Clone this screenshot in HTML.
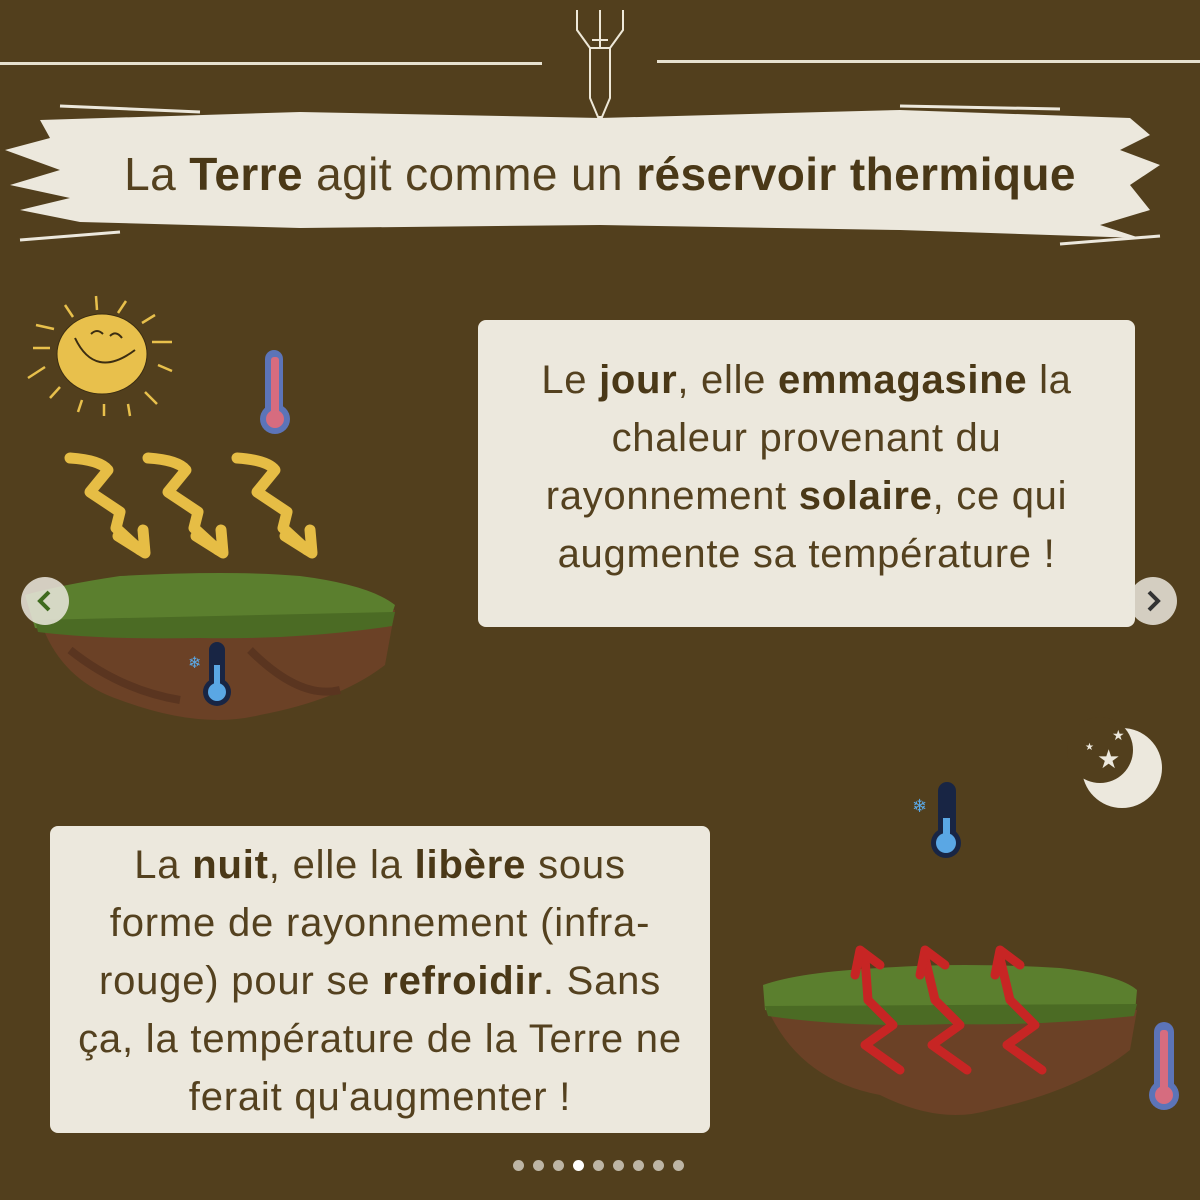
<!DOCTYPE html>
<html><head><meta charset="utf-8"><style>
html,body{margin:0;padding:0;}
body{width:1200px;height:1200px;background:#523f1d;position:relative;overflow:hidden;font-family:"Liberation Sans","DejaVu Sans",sans-serif;}
svg{position:absolute;left:0;top:0;}
.t{position:absolute;color:#54411f;text-align:center;}
.t b{font-weight:bold;color:#4a3817;}
.box{position:absolute;background:#ece8dd;border-radius:8px;}
.title{position:absolute;left:0;width:1200px;top:147px;text-align:center;font-size:46px;color:#54411f;letter-spacing:0.4px;}
.title b{color:#4a3817;}
.p{font-size:40px;line-height:58px;white-space:nowrap;}
.dots{position:absolute;top:1158px;left:513px;}
.dots i{display:inline-block;width:11px;height:11px;border-radius:50%;background:#bdb5a5;margin-right:9px;}
.nav{position:absolute;width:48px;height:48px;border-radius:50%;background:rgba(235,232,222,.85);}
</style></head><body>
<svg width="1200" height="1200" viewBox="0 0 1200 1200">
<rect x="0" y="62" width="542" height="3" fill="#e7e1cf"/>
<rect x="657" y="60" width="543" height="3" fill="#e7e1cf"/>
<g fill="none" stroke="#eee8d8" stroke-width="2">
<path d="M577 10 L577 30 L590 48 M623 10 L623 30 L610 48 M600 10 L600 48 M590 48 L590 98 L598 117 L602 117 L610 98 L610 48 Z M592 40 L608 40"/>
</g>
<path d="M40 120 L300 112 L600 118 L900 110 L1130 118 L1150 135 L1120 150 L1160 165 L1130 185 L1150 210 L1100 225 L1140 238 L900 230 L600 225 L300 228 L80 222 L20 210 L70 198 L10 185 L60 170 L5 150 L50 138 Z" fill="#ece8dd"/>
<g stroke="#ece8dd" stroke-width="3">
<line x1="60" y1="106" x2="200" y2="112"/><line x1="900" y1="106" x2="1060" y2="109"/>
<line x1="20" y1="240" x2="120" y2="232"/><line x1="1060" y1="244" x2="1160" y2="236"/>
</g>
<g stroke="#e8c04c" stroke-width="2.5">
<line x1="96" y1="296" x2="97" y2="310"/><line x1="65" y1="305" x2="73" y2="317"/><line x1="126" y1="301" x2="118" y2="313"/>
<line x1="36" y1="325" x2="54" y2="329"/><line x1="142" y1="323" x2="155" y2="315"/>
<line x1="33" y1="348" x2="50" y2="348"/><line x1="152" y1="342" x2="172" y2="342"/>
<line x1="28" y1="378" x2="45" y2="367"/><line x1="158" y1="365" x2="172" y2="371"/>
<line x1="50" y1="398" x2="60" y2="387"/><line x1="145" y1="392" x2="157" y2="404"/>
<line x1="78" y1="412" x2="82" y2="400"/><line x1="104" y1="416" x2="104" y2="404"/><line x1="130" y1="416" x2="128" y2="404"/>
</g>
<ellipse cx="102" cy="354" rx="45" ry="40" fill="#e8c04c" stroke="#3b2d12" stroke-width="1"/>
<g fill="none" stroke="#3b2d12" stroke-width="2"><path d="M75 338 Q95 380 135 350"/><path d="M91 334 Q97 328 103 334"/><path d="M110 336 Q116 330 122 338"/></g>
<g fill="none" stroke="#e6bd45" stroke-width="11" stroke-linecap="round" stroke-linejoin="round">
<path d="M70 458 Q100 460 108 470 L90 492 L120 512 L116 528 L140 550"/><path d="M118 536 L145 553 L143 530"/>
<path d="M148 458 Q178 460 186 470 L168 492 L198 512 L194 528 L218 550"/><path d="M196 536 L223 553 L221 530"/>
<path d="M237 458 Q267 460 275 470 L257 492 L287 512 L283 528 L307 550"/><path d="M285 536 L312 553 L310 530"/>
</g>
<g><rect x="265" y="350" width="18" height="70" rx="9" fill="#5c74b8"/><circle cx="275" cy="419" r="15" fill="#5c74b8"/><rect x="271" y="357" width="8" height="60" rx="3" fill="#d66c7f"/><circle cx="275" cy="419" r="9" fill="#d66c7f"/></g>
<path d="M40 620 Q60 680 120 700 Q200 730 260 715 Q340 700 385 665 L395 610 L40 620 Z" fill="#6b4126"/>
<path d="M70 650 Q120 690 180 700 M250 650 Q300 700 340 690" stroke="#5a3520" stroke-width="8" fill="none"/>
<path d="M25 595 Q60 585 120 576 Q230 570 300 576 Q370 585 395 605 L390 620 Q300 638 200 634 Q100 636 35 628 Z" fill="#5b7f2e"/>
<path d="M35 620 L395 612 L392 626 Q300 640 200 638 Q100 640 38 632 Z" fill="#4b6b24"/>
<g><rect x="209" y="642" width="16" height="50" rx="8" fill="#182544"/><circle cx="217" cy="692" r="14" fill="#182544"/><rect x="214" y="665" width="6" height="30" fill="#5aa7e4"/><circle cx="217" cy="692" r="9" fill="#5aa7e4"/></g>
<text x="188" y="668" font-size="16" fill="#5aa7e4" font-family="DejaVu Sans">❄</text>
<!-- moon -->
<circle cx="1122" cy="768" r="40" fill="#ece8dd"/>
<circle cx="1100" cy="750" r="33" fill="#523f1d"/>
<text x="1097" y="768" font-size="26" fill="#ece8dd" font-family="DejaVu Sans">★</text>
<text x="1112" y="740" font-size="14" fill="#ece8dd" font-family="DejaVu Sans">★</text>
<text x="1085" y="750" font-size="10" fill="#ece8dd" font-family="DejaVu Sans">★</text>
<g><rect x="938" y="782" width="18" height="60" rx="9" fill="#182544"/><circle cx="946" cy="843" r="15" fill="#182544"/><rect x="943" y="818" width="7" height="28" fill="#5aa7e4"/><circle cx="946" cy="843" r="10" fill="#5aa7e4"/></g>
<text x="912" y="812" font-size="18" fill="#5aa7e4" font-family="DejaVu Sans">❄</text>
<path d="M768 1010 Q800 1080 880 1095 Q940 1125 990 1110 Q1080 1090 1130 1050 L1137 1010 Z" fill="#6b4126"/>
<path d="M763 985 Q800 972 880 968 Q960 962 1060 968 Q1120 975 1137 990 L1135 1012 Q1040 1022 950 1020 Q850 1024 765 1010 Z" fill="#5b7f2e"/>
<path d="M765 1006 L1137 1004 L1134 1016 Q1040 1026 950 1024 Q850 1028 768 1016 Z" fill="#4b6b24"/>
<g fill="none" stroke="#c72524" stroke-width="9" stroke-linecap="round" stroke-linejoin="round">
<path d="M900 1070 L865 1045 L893 1025 L868 1000 L865 958"/><path d="M855 975 L860 950 L880 965"/>
<path d="M967 1070 L932 1045 L960 1025 L935 1000 L925 958"/><path d="M920 975 L925 950 L945 965"/>
<path d="M1042 1070 L1007 1045 L1035 1025 L1010 1000 L1000 958"/><path d="M995 975 L1000 950 L1020 965"/>
</g>
<g><rect x="1154" y="1022" width="20" height="75" rx="10" fill="#5c74b8"/><circle cx="1164" cy="1095" r="15" fill="#5c74b8"/><rect x="1160" y="1030" width="8" height="65" rx="3" fill="#d66c7f"/><circle cx="1164" cy="1095" r="9" fill="#d66c7f"/></g>
</svg>
<div class="title">La <b>Terre</b> agit comme un <b>réservoir thermique</b></div>
<div class="box" style="left:478px;top:320px;width:657px;height:307px;"></div>
<div class="t p" style="left:478px;top:351px;width:657px;letter-spacing:0.7px;">Le <b>jour</b>, elle <b>emmagasine</b> la<br>chaleur provenant du<br>rayonnement <b>solaire</b>, ce qui<br>augmente sa température !</div>
<div class="box" style="left:50px;top:826px;width:660px;height:307px;"></div>
<div class="t p" style="left:50px;top:836px;width:660px;letter-spacing:0.8px;">La <b>nuit</b>, elle la <b>libère</b> sous<br>forme de rayonnement (infra-<br>rouge) pour se <b>refroidir</b>. Sans<br>ça, la température de la Terre ne<br>ferait qu'augmenter !</div>
<div class="nav" style="left:21px;top:577px;"><svg width="48" height="48"><path d="M28 15 L19 24 L28 33" stroke="#3f6b1e" stroke-width="4" fill="none"/></svg></div>
<div class="nav" style="left:1129px;top:577px;"><svg width="48" height="48"><path d="M20 15 L29 24 L20 33" stroke="#333" stroke-width="4" fill="none"/></svg></div>
<div class="dots"><i></i><i></i><i></i><i style="background:#fff"></i><i></i><i></i><i></i><i></i><i></i></div>
</body></html>
